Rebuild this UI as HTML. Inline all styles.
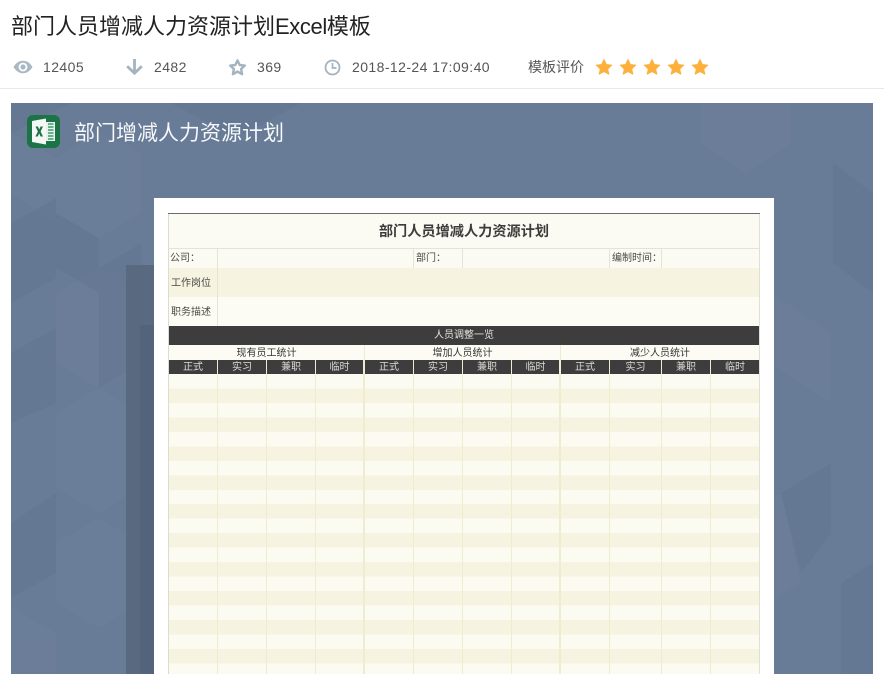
<!DOCTYPE html>
<html lang="zh"><head><meta charset="utf-8"><title>部门人员增减人力资源计划Excel模板</title>
<style>
html,body{margin:0;padding:0;background:#fff}
body{width:884px;height:674px;overflow:hidden;position:relative;font-family:"Liberation Sans","Noto Sans CJK SC",sans-serif;color:#333}
.a{position:absolute;white-space:nowrap}
.s{font-size:14px;color:#555;line-height:20px;top:57px;letter-spacing:.42px}
.t{position:absolute;white-space:nowrap;font-size:10px;line-height:14px;color:#4a4a45;text-align:center}
.l{position:absolute;width:1px}
</style></head><body>
<div class="a" style="left:11px;top:11px;font-size:22px;line-height:32px;color:#222">部门人员增减人力资源计划<span style="letter-spacing:-.4px">Excel</span>模板</div>

<svg class="a" style="left:13px;top:60px" width="20" height="14" viewBox="0 0 20 14"><path fill-rule="evenodd" fill="#a9b9c4" d="M0.5 7C3 2.8 6.2 0.8 10 0.8S17 2.8 19.5 7C17 11.2 13.8 13.2 10 13.2S3 11.2 0.5 7ZM10 2.6a4.4 4.4 0 1 0 0 8.8a4.4 4.4 0 0 0 0-8.8Z"/><circle cx="10" cy="7" r="2.6" fill="#a9b9c4"/></svg>
<div class="a s" style="left:43px">12405</div>
<svg class="a" style="left:126px;top:58px" width="17" height="17" viewBox="0 0 17 17"><path fill="none" stroke="#a3b4c0" stroke-width="2.8" d="M8.5 1V15M1.2 8.2L8.5 15.2L15.8 8.2"/></svg>
<div class="a s" style="left:154px">2482</div>
<svg class="a" style="left:228px;top:58px" width="19" height="19" viewBox="0 0 19 19"><path fill="none" stroke="#a3b4c0" stroke-width="2.4" stroke-linejoin="round" d="M9.5 2.4L11.7 7L16.8 7.6L13.1 11L14.1 16.2L9.5 13.6L4.9 16.2L5.9 11L2.2 7.6L7.3 7Z"/></svg>
<div class="a s" style="left:257px">369</div>
<svg class="a" style="left:324px;top:59px" width="17" height="17" viewBox="0 0 17 17"><circle cx="8.5" cy="8.5" r="7" fill="none" stroke="#a3b4c0" stroke-width="1.8"/><path fill="none" stroke="#a3b4c0" stroke-width="1.7" d="M8.5 4V9H12.5"/></svg>
<div class="a s" style="left:352px">2018-12-24 17:09:40</div>
<div class="a s" style="left:528px;color:#555;letter-spacing:0">模板评价</div>
<svg class="a" style="left:595px;top:58px" width="120" height="19" viewBox="0 0 120 19" fill="#fdb03a" stroke="#fdb03a" stroke-width=".8" stroke-linejoin="round">
<path d="M9 1.4L11.4 6.4L16.9 7.1L12.8 10.9L13.9 16.3L9 13.7L4.1 16.3L5.2 10.9L1.1 7.1L6.6 6.4Z"/>
<path transform="translate(24 0)" d="M9 1.4L11.4 6.4L16.9 7.1L12.8 10.9L13.9 16.3L9 13.7L4.1 16.3L5.2 10.9L1.1 7.1L6.6 6.4Z"/>
<path transform="translate(48 0)" d="M9 1.4L11.4 6.4L16.9 7.1L12.8 10.9L13.9 16.3L9 13.7L4.1 16.3L5.2 10.9L1.1 7.1L6.6 6.4Z"/>
<path transform="translate(72 0)" d="M9 1.4L11.4 6.4L16.9 7.1L12.8 10.9L13.9 16.3L9 13.7L4.1 16.3L5.2 10.9L1.1 7.1L6.6 6.4Z"/>
<path transform="translate(96 0)" d="M9 1.4L11.4 6.4L16.9 7.1L12.8 10.9L13.9 16.3L9 13.7L4.1 16.3L5.2 10.9L1.1 7.1L6.6 6.4Z"/>
</svg>
<div class="a" style="left:0;top:88px;width:884px;height:1px;background:#e8e8e8"></div>

<!-- panel -->
<svg class="a" style="left:11px;top:103px" width="862" height="571" viewBox="0 0 862 571">
<rect width="862" height="571" fill="#687b97"/>
<g fill="#70839d" opacity=".4">
<path d="M0 30L45 55V120L0 90Z"/><path d="M45 55L88 30L130 50V110L88 135L45 110Z"/>
<path d="M45 190L88 165L130 190V260L88 285L45 260Z"/>
<path d="M45 310L88 285L130 310V385L88 410L45 385Z"/><path d="M45 440L88 415L130 440V500L88 525L45 500Z"/>
<path d="M690 0L780 0V40L735 70L690 40Z"/><path d="M760 190L820 230V300L760 260Z"/><path d="M700 430L770 390L790 480L720 520Z"/>
<path d="M0 505L45 530V571H0Z"/>
</g>
<g fill="#60738f" opacity=".4">
<path d="M0 120L45 95V175L0 200Z"/><path d="M0 250L45 225V300L0 320Z"/><path d="M0 420L45 390V470L0 495Z"/>
<path d="M45 110L88 135V190L45 165Z"/><path d="M88 285L130 260V140L88 165Z"/>
<path d="M0 0H60L0 30Z"/><path d="M160 0H290L225 35Z"/>
<path d="M822 60L862 90V190L822 160Z"/><path d="M770 390L820 360V430L790 470Z"/><path d="M830 480L862 460V571H830Z"/>
</g>
<path d="M115 162H143V571H115Z" fill="#59697f"/>
<path d="M129 222H143V571H129Z" fill="#53637c"/>
</svg>

<svg class="a" style="left:27px;top:115px" width="33" height="33" viewBox="0 0 33 33">
<rect width="33" height="33" rx="6" fill="#1c7346"/>
<path d="M5 6L19 3.5V29.5L5 27Z" fill="#f4f8f5"/>
<path d="M19 7H28V26H19Z" fill="#e8f1ec"/>
<path d="M21 9H26.5M21 12H26.5M21 15H26.5M21 18H26.5M21 21H26.5M21 24H26.5" stroke="#3f9a6c" stroke-width="1.6" fill="none"/>
<path d="M8.5 11.5H11L12.2 14.5L13.6 11.5H16L13.6 16.5L16 21.5H13.5L12.2 18.4L10.8 21.5H8.4L10.9 16.5Z" fill="#1c7346"/>
</svg>
<div class="a" style="left:74px;top:118px;font-size:21px;line-height:32px;color:#f6f8fa">部门增减人力资源计划</div>

<!-- sheet -->
<div class="a" style="left:154px;top:198px;width:620px;height:476px;background:#fff"></div>
<div class="a" style="left:168px;top:213px;width:592px;height:461px;background:#fcfbf3;box-sizing:border-box;border-right:1px solid #e2e0d2;border-left:1px solid #dddcd0"></div>
<div class="a" style="left:168px;top:213px;width:592px;height:1px;background:#6b6b68"></div>
<div class="a" style="left:168px;top:215px;width:592px;text-align:center;font-size:14.2px;line-height:34px;font-weight:bold;color:#3c3c3c">部门人员增减人力资源计划</div>
<div class="a" style="left:169px;top:248px;width:590px;height:1px;background:#e4e3da"></div>
<div class="a" style="left:169px;top:268px;width:590px;height:29px;background:#f6f3e0"></div>
<div class="a" style="left:169px;top:297px;width:590px;height:29px;background:#fdfcf4"></div>
<div class="l" style="left:217px;top:248px;height:78px;background:#e6e4d6"></div>
<div class="l" style="left:413px;top:248px;height:20px;background:#e6e4d6"></div>
<div class="l" style="left:462px;top:248px;height:20px;background:#e6e4d6"></div>
<div class="l" style="left:609px;top:248px;height:20px;background:#e6e4d6"></div>
<div class="l" style="left:661px;top:248px;height:20px;background:#e6e4d6"></div>
<div class="t" style="left:170px;top:252px">公司：</div>
<div class="t" style="left:416px;top:252px">部门：</div>
<div class="t" style="left:612px;top:252px">编制时间：</div>
<div class="t" style="left:171px;top:277px">工作岗位</div>
<div class="t" style="left:171px;top:306px">职务描述</div>

<div class="a" style="left:169px;top:326px;width:590px;height:19px;background:#3d3d3d"></div>
<div class="t" style="left:169px;top:329px;width:590px;color:#e4e4de">人员调整一览</div>
<div class="a" style="left:169px;top:345px;width:590px;height:15px;background:#fdfcf4"></div>
<div class="l" style="left:364px;top:345px;height:15px;background:#efecd0"></div>
<div class="l" style="left:560px;top:345px;height:15px;background:#efecd0"></div>
<div class="t" style="left:169px;top:347px;width:195px;color:#333">现有员工统计</div>
<div class="t" style="left:365px;top:347px;width:195px;color:#333">增加人员统计</div>
<div class="t" style="left:561px;top:347px;width:198px;color:#333">减少人员统计</div>

<div class="a" style="left:169px;top:360px;width:590px;height:14px;background:#3d3d3d"></div>
<div class="a" style="left:169px;top:374px;width:590px;height:300px;background:repeating-linear-gradient(180deg,#fcfbf2 0,#fcfbf2 14.47px,#f6f3e0 14.47px,#f6f3e0 28.94px)"></div>

<div class="l" style="left:217px;top:360px;height:314px;background:#efeccf"></div>
<div class="l" style="left:266px;top:360px;height:314px;background:#efeccf"></div>
<div class="l" style="left:315px;top:360px;height:314px;background:#efeccf"></div>
<div class="l" style="left:363px;top:360px;height:314px;width:2px;background:#efeccf"></div>
<div class="l" style="left:413px;top:360px;height:314px;background:#efeccf"></div>
<div class="l" style="left:462px;top:360px;height:314px;background:#efeccf"></div>
<div class="l" style="left:511px;top:360px;height:314px;background:#efeccf"></div>
<div class="l" style="left:559px;top:360px;height:314px;width:2px;background:#efeccf"></div>
<div class="l" style="left:609px;top:360px;height:314px;background:#efeccf"></div>
<div class="l" style="left:661px;top:360px;height:314px;background:#efeccf"></div>
<div class="l" style="left:710px;top:360px;height:314px;background:#efeccf"></div>

<div class="t" style="left:169px;top:361px;width:48px;color:#dcdcd6">正式</div>
<div class="t" style="left:218px;top:361px;width:48px;color:#dcdcd6">实习</div>
<div class="t" style="left:267px;top:361px;width:48px;color:#dcdcd6">兼职</div>
<div class="t" style="left:316px;top:361px;width:47px;color:#dcdcd6">临时</div>
<div class="t" style="left:365px;top:361px;width:48px;color:#dcdcd6">正式</div>
<div class="t" style="left:414px;top:361px;width:48px;color:#dcdcd6">实习</div>
<div class="t" style="left:463px;top:361px;width:48px;color:#dcdcd6">兼职</div>
<div class="t" style="left:512px;top:361px;width:47px;color:#dcdcd6">临时</div>
<div class="t" style="left:561px;top:361px;width:48px;color:#dcdcd6">正式</div>
<div class="t" style="left:610px;top:361px;width:51px;color:#dcdcd6">实习</div>
<div class="t" style="left:662px;top:361px;width:48px;color:#dcdcd6">兼职</div>
<div class="t" style="left:711px;top:361px;width:48px;color:#dcdcd6">临时</div>
</body></html>
